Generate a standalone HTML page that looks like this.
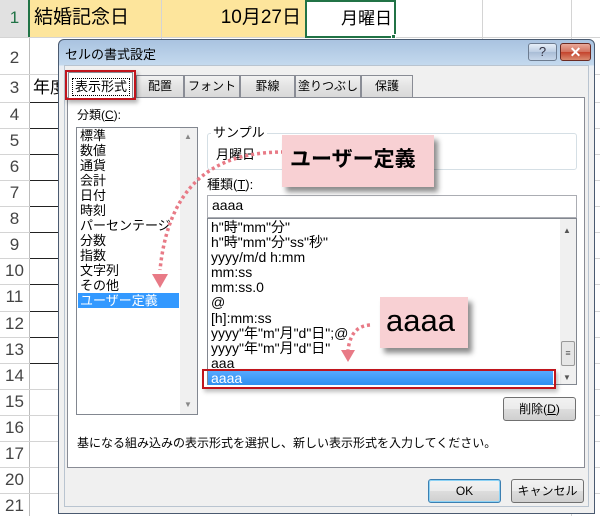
<!DOCTYPE html>
<html><head><meta charset="utf-8"><style>
*{margin:0;padding:0;box-sizing:border-box}
body{width:600px;height:516px;position:relative;overflow:hidden;background:#fff;font-family:"Liberation Sans","Noto Sans CJK JP",sans-serif;color:#000}
.a{position:absolute}
.hl{position:absolute;height:1px;background:#d4d4d4}
.vl{position:absolute;width:1px;background:#d4d4d4}
.rn{position:absolute;left:0;width:29px;text-align:center;font-size:17px;color:#444}
.t{position:absolute;font-size:12px;white-space:nowrap;line-height:15px}
.btn{position:absolute;border:1px solid #707070;border-radius:3px;background:linear-gradient(#f2f2f2,#ebebeb 50%,#dddddd 51%,#cfcfcf);font-size:12px;text-align:center;line-height:22px}
.tab{position:absolute;top:75px;height:22px;border:1px solid #898c95;border-bottom:none;background:linear-gradient(#f2f2f2,#e3e3e3 50%,#d9d9d9);font-size:12px;text-align:center;line-height:21px}
</style></head><body>
<div class="a" style="left:30px;top:0;width:275px;height:37px;background:#fde59c"></div>
<div class="a" style="left:0;top:0;width:29px;height:37px;background:#e1e1e1"></div>
<div class="a" style="left:28px;top:0;width:2px;height:37px;background:#217346"></div>
<div class="vl" style="left:29px;top:37px;height:479px;background:#bdbdbd"></div>
<div class="vl" style="left:161px;top:0;height:40px"></div>
<div class="vl" style="left:482px;top:0;height:40px"></div>
<div class="vl" style="left:571px;top:0;height:516px"></div>
<div class="hl" style="left:0;top:37px;width:600px"></div>
<div class="hl" style="left:0;top:74px;width:600px"></div>
<div class="hl" style="left:0;top:102px;width:600px"></div>
<div id="rows"></div>
<div class="a" style="left:305px;top:0;width:91px;height:38px;border:2px solid #217346"></div>
<div class="a" style="left:391px;top:34px;width:5px;height:5px;background:#217346;border:1px solid #fff"></div>
<div class="a" style="left:34px;top:5px;font-size:19px;line-height:26px">結婚記念日</div>
<div class="a" style="left:180px;width:121px;text-align:right;top:5px;font-size:19px;line-height:26px">10月27日</div>
<div class="a" style="left:310px;width:82px;text-align:right;top:6px;font-size:17px;line-height:26px">月曜日</div>
<div class="a" style="left:33px;top:77px;font-size:17px;line-height:22px">年度</div>
<div class="rn" style="top:8px;color:#217346">1</div>
<div class="rn" style="top:48px">2</div>
<div class="rn" style="top:78px">3</div>
<script>
var h='';var tops=[102,128,154,180,206,232,258,284,311,337,363,389,415,441,467,493];var lab=[4,5,6,7,8,9,10,11,12,13,14,15,16,17,20,21];
for(var i=0;i<16;i++){h+='<div class="rn" style="top:'+(tops[i]+3)+'px">'+lab[i]+'</div>';if(i>0)h+='<div class="hl" style="left:0;top:'+tops[i]+'px;width:600px"></div>';if(i<=10)h+='<div class="a" style="left:30px;top:'+tops[i]+'px;width:30px;height:1px;background:#222"></div>';}
document.getElementById('rows').innerHTML=h;
</script>
<div class="a" style="left:58px;top:39px;width:537px;height:475px;border:1px solid #4a5a70;border-radius:6px 6px 0 0;background:linear-gradient(#a9c3e0,#c4d9ee 25px,#e9eef4 26px,#f0f0f0 40px)"></div>
<div class="a" style="left:64px;top:65px;width:525px;height:442px;background:#f0f0f0;border:1px solid #b9c4d0"></div>
<div class="a" style="left:65px;top:44px;font-size:13px">セルの書式設定</div>
<div class="a" style="left:528px;top:43px;width:29px;height:18px;border:1px solid #6d7c90;border-radius:3px;background:linear-gradient(#e6eef8,#bccde2 50%,#a9bdd6 51%,#c7d7ea);font-size:13px;text-align:center;line-height:16px;color:#334">?</div>
<div class="a" style="left:560px;top:43px;width:31px;height:18px;border:1px solid #6b2a22;border-radius:3px;background:linear-gradient(#e9a99a,#d2705c 50%,#c4432c 51%,#da8a6f);font-size:14px;font-weight:bold;text-align:center;line-height:17px;color:#fff">✕</div>
<div class="a" style="left:67px;top:97px;width:518px;height:371px;background:#fff;border:1px solid #898c95"></div>
<div class="tab" style="left:136px;width:48px">配置</div>
<div class="tab" style="left:184px;width:56px">フォント</div>
<div class="tab" style="left:240px;width:55px">罫線</div>
<div class="tab" style="left:295px;width:66px">塗りつぶし</div>
<div class="tab" style="left:361px;width:52px">保護</div>
<div class="a" style="left:68px;top:72px;width:65px;height:27px;background:#fff;border:1px solid #898c95;border-bottom:none"></div>
<div class="a" style="left:72px;top:78px;width:58px;height:18px;border:1px dotted #000;font-size:13px;text-align:center;line-height:16px">表示形式</div>
<div class="a" style="left:65px;top:70px;width:71px;height:30px;border:2px solid #c0141c;box-shadow:2px 3px 4px rgba(0,0,0,.3)"></div>
<div class="t" style="left:77px;top:108px">分類(<u>C</u>):</div>
<div class="a" style="left:76px;top:127px;width:122px;height:288px;border:1px solid #828790;background:#fff"></div>
<div class="a" style="left:180px;top:128px;width:17px;height:286px;background:#f0f0f0"></div>
<div class="a" style="left:184px;top:132px;font-size:8px;color:#888">▲</div>
<div class="a" style="left:184px;top:400px;font-size:8px;color:#888">▼</div>
<div class="a" style="left:78px;top:293px;width:101px;height:15px;background:#3399ff"></div>
<div class="t" style="left:80px;top:128px;line-height:15px;font-size:13px">標準<br>数値<br>通貨<br>会計<br>日付<br>時刻<br>パーセンテージ<br>分数<br>指数<br>文字列<br>その他<br><span style="color:#fff">ユーザー定義</span></div>
<div class="a" style="left:207px;top:133px;width:370px;height:37px;border:1px solid #d5dfe5;border-radius:3px"></div>
<div class="t" style="left:211px;top:125px;background:#fff;padding:0 2px;font-size:13px">サンプル</div>
<div class="t" style="left:216px;top:147px;font-size:13px">月曜日</div>
<div class="t" style="left:207px;top:177px;font-size:13px">種類(<u>T</u>):</div>
<div class="a" style="left:207px;top:195px;width:370px;height:23px;border:1px solid #abadb3;background:#fff"></div>
<div class="t" style="left:212px;top:198px;font-size:14px">aaaa</div>
<div class="a" style="left:207px;top:218px;width:370px;height:167px;border:1px solid #828790;background:#fff"></div>
<div class="a" style="left:560px;top:219px;width:16px;height:165px;background:#f0f0f0"></div>
<div class="a" style="left:563px;top:226px;font-size:8px;color:#555">▲</div>
<div class="a" style="left:563px;top:373px;font-size:8px;color:#555">▼</div>
<div class="a" style="left:561px;top:341px;width:14px;height:25px;border:1px solid #999;border-radius:2px;background:#e6e6e6;font-size:9px;text-align:center;line-height:23px;color:#555">≡</div>
<div class="a" style="left:208px;top:371px;width:345px;height:14px;background:linear-gradient(#56a9ff,#2f8ff0)"></div>
<div class="t" style="left:211px;top:220px;line-height:15.1px;font-size:14px">h"時"mm"分"<br>h"時"mm"分"ss"秒"<br>yyyy/m/d h:mm<br>mm:ss<br>mm:ss.0<br>@<br>[h]:mm:ss<br>yyyy"年"m"月"d"日";@<br>yyyy"年"m"月"d"日"<br>aaa<br><span style="color:#fff">aaaa</span></div>
<div class="a" style="left:202px;top:369px;width:354px;height:20px;border:2px solid #c0141c;box-shadow:2px 3px 4px rgba(0,0,0,.25)"></div>
<div class="btn" style="left:503px;top:397px;width:73px;height:24px">削除(<u>D</u>)</div>
<div class="t" style="left:77px;top:436px;font-size:12px">基になる組み込みの表示形式を選択し、新しい表示形式を入力してください。</div>
<div class="btn" style="left:428px;top:479px;width:73px;height:24px;border-color:#3c7fb1;box-shadow:inset 0 0 0 1px #8cd2f5">OK</div>
<div class="btn" style="left:511px;top:479px;width:73px;height:24px">キャンセル</div>
<svg class="a" style="left:0;top:0" width="600" height="516">
<path d="M284,152 C230,152 170,170 160,270" fill="none" stroke="#e87a86" stroke-width="3.5" stroke-dasharray="3,3"/>
<polygon points="152,274 168,274 160,288" fill="#e87a86"/>
<path d="M370,325 C356,326 350,335 348,350" fill="none" stroke="#e87a86" stroke-width="3.5" stroke-dasharray="3,3"/>
<polygon points="341,350 355,350 348,362" fill="#e87a86"/>
</svg>
<div class="a" style="left:282px;top:135px;width:152px;height:52px;background:#f8d0d3;box-shadow:4px 5px 5px rgba(0,0,0,.45);font-size:21px;font-weight:bold;line-height:50px;padding-left:8px">ユーザー定義</div>
<div class="a" style="left:380px;top:297px;width:88px;height:51px;background:#f8d0d3;box-shadow:4px 5px 5px rgba(0,0,0,.45);font-size:31px;line-height:48px;padding-left:6px">aaaa</div>
</body></html>
